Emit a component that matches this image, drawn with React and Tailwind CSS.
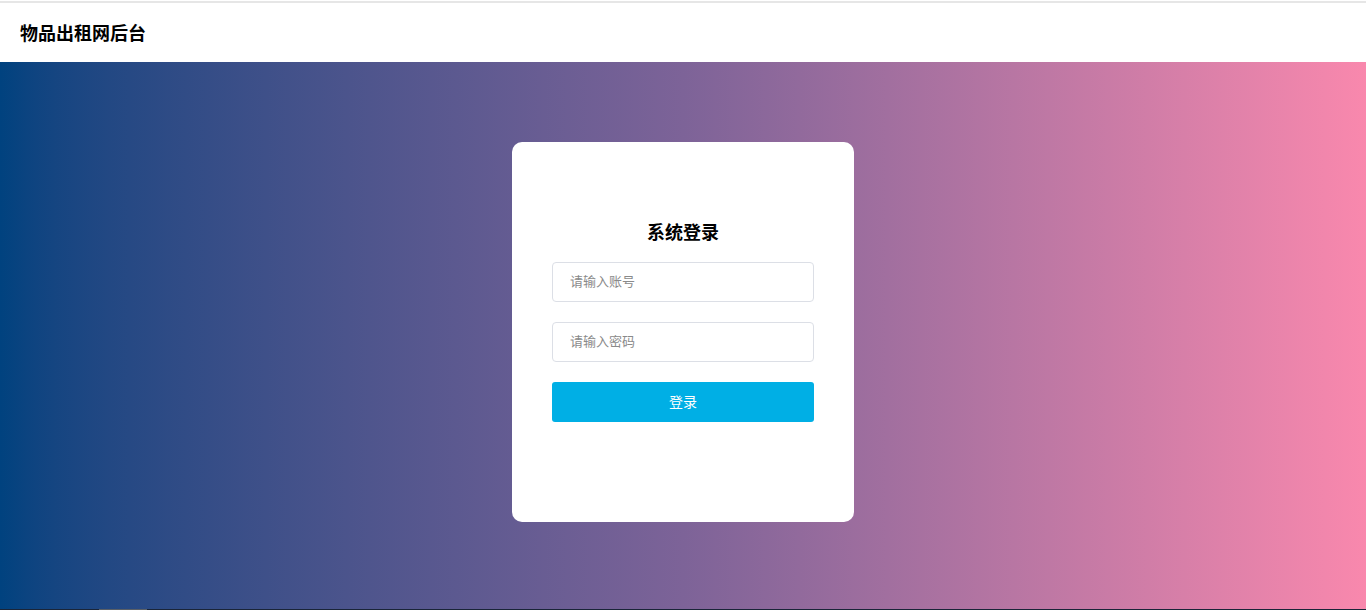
export default function App() {
  const font = { fontFamily: '"Liberation Sans", "Noto Sans CJK SC", sans-serif' };
  return (
    <div className="w-[1366px] h-[610px] flex flex-col overflow-hidden bg-white" style={font}>
      <div className="h-[62px] shrink-0 bg-white pt-px">
        <div className="h-[2px] bg-[#e6e6e6]" />
        <div className="h-[59px] flex items-center pl-5 pt-[2px]">
          <span className="text-[18px] font-bold text-black leading-none">物品出租网后台</span>
        </div>
      </div>
      <div className="h-[547px] shrink-0 bg-gradient-to-r from-[#00427f] via-[#7d6398] to-[#f988ad] flex justify-center pt-[80px]">
        <div className="w-[342px] h-[380px] bg-white rounded-[10px] flex flex-col items-center pt-[79px]">
          <div className="text-[18px] font-bold text-black leading-6 h-6">系统登录</div>
          <div className="mt-[17px] w-[262px] h-10 border border-[#dcdfe6] rounded flex items-center pl-[17px] text-[13px] text-[#8a8a8a]">请输入账号</div>
          <div className="mt-5 w-[262px] h-10 border border-[#dcdfe6] rounded flex items-center pl-[17px] text-[13px] text-[#8a8a8a]">请输入密码</div>
          <div className="mt-5 w-[262px] h-10 bg-[#00afe5] rounded-[3px] flex items-center justify-center text-[14px] text-white">登录</div>
        </div>
      </div>
      <div className="h-px shrink-0 bg-[#1a2538] flex">
        <div className="w-[99px]" />
        <div className="w-[48px] bg-[#5a5f66]" />
      </div>
    </div>
  );
}
